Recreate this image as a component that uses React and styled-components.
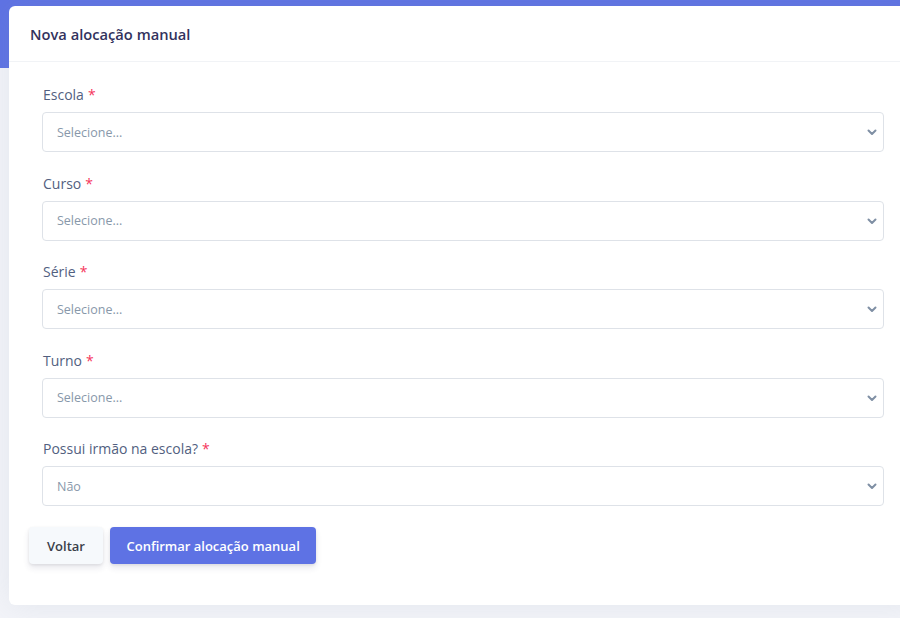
import styled, { createGlobalStyle } from "styled-components";

const GlobalStyle = createGlobalStyle`
  html, body {
    margin: 0;
    padding: 0;
    overflow: hidden;
    font-family: "Open Sans", "Liberation Sans", sans-serif;
  }
  * { box-sizing: border-box; }
`;

const Page = styled.div`
  min-height: 618px;
  padding: 6px 0 0 9px;
  background: linear-gradient(#5e72e4 0 68px, #f3f4f9 68px 100%);
`;

const Card = styled.div`
  margin-right: -17px;
  background: #fff;
  border-radius: 6px;
  box-shadow: 0 0 2rem 0 rgba(136, 152, 170, 0.15);
`;

const CardHeader = styled.div`
  height: 56px;
  display: flex;
  align-items: center;
  padding: 0 21px;
  border-bottom: 1px solid #f1f3f6;
`;

const Title = styled.h3`
  margin: 0;
  font-size: 14.7px;
  font-weight: 600;
  color: #32325d;
`;

const CardBody = styled.form`
  padding: 22px 33px 41px 33px;
`;

const Field = styled.div`
  margin-bottom: 20.5px;
`;

const Label = styled.label`
  display: block;
  margin: 0 0 7px 1px;
  font-size: 14px;
  line-height: 21px;
  color: #525f7f;
`;

const Required = styled.span`
  color: #f5365c;
  margin-left: 4px;
`;

const SelectWrap = styled.div`
  position: relative;
`;

const Select = styled.select`
  appearance: none;
  width: 100%;
  height: 40px;
  padding: 0 36px 0 14px;
  font-family: inherit;
  font-size: 12.5px;
  color: #8898aa;
  background: #fff;
  border: 1px solid #dee2e8;
  border-radius: 4px;
  outline: none;
`;

const Chevron = styled.svg`
  position: absolute;
  right: 4px;
  top: 50%;
  transform: translateY(-50%);
  pointer-events: none;
`;

const Actions = styled.div`
  display: flex;
  gap: 7px;
  margin: 21px 0 0 -13px;
`;

const Button = styled.button`
  height: 37px;
  padding: 0 ${(p) => (p.$primary ? "16.5px" : "18px")};
  font-family: inherit;
  font-size: 13px;
  font-weight: 600;
  border: none;
  border-radius: 4px;
  cursor: pointer;
  color: ${(p) => (p.$primary ? "#fff" : "#3b3f4a")};
  background: ${(p) => (p.$primary ? "#5e72e4" : "#f6f9fc")};
  box-shadow: 0 4px 6px rgba(50, 50, 93, 0.11), 0 1px 3px rgba(0, 0, 0, 0.08);
`;

const fields = [
  { label: "Escola", value: "Selecione..." },
  { label: "Curso", value: "Selecione..." },
  { label: "Série", value: "Selecione..." },
  { label: "Turno", value: "Selecione..." },
  { label: "Possui irmão na escola?", value: "Não" },
];

function SelectField({ label, value }) {
  return (
    <Field>
      <Label>
        {label}
        <Required>*</Required>
      </Label>
      <SelectWrap>
        <Select defaultValue={value}>
          <option>{value}</option>
        </Select>
        <Chevron width="16" height="16" viewBox="0 0 16 16">
          <path
            d="M4.5 6.5 L8 10 L11.5 6.5"
            fill="none"
            stroke="#7f8fa4"
            strokeWidth="2"
            strokeLinecap="round"
            strokeLinejoin="round"
          />
        </Chevron>
      </SelectWrap>
    </Field>
  );
}

export default function App() {
  return (
    <Page>
      <GlobalStyle />
      <Card>
        <CardHeader>
          <Title>Nova alocação manual</Title>
        </CardHeader>
        <CardBody>
          {fields.map((f) => (
            <SelectField key={f.label} {...f} />
          ))}
          <Actions>
            <Button type="button">Voltar</Button>
            <Button type="button" $primary>
              Confirmar alocação manual
            </Button>
          </Actions>
        </CardBody>
      </Card>
    </Page>
  );
}
